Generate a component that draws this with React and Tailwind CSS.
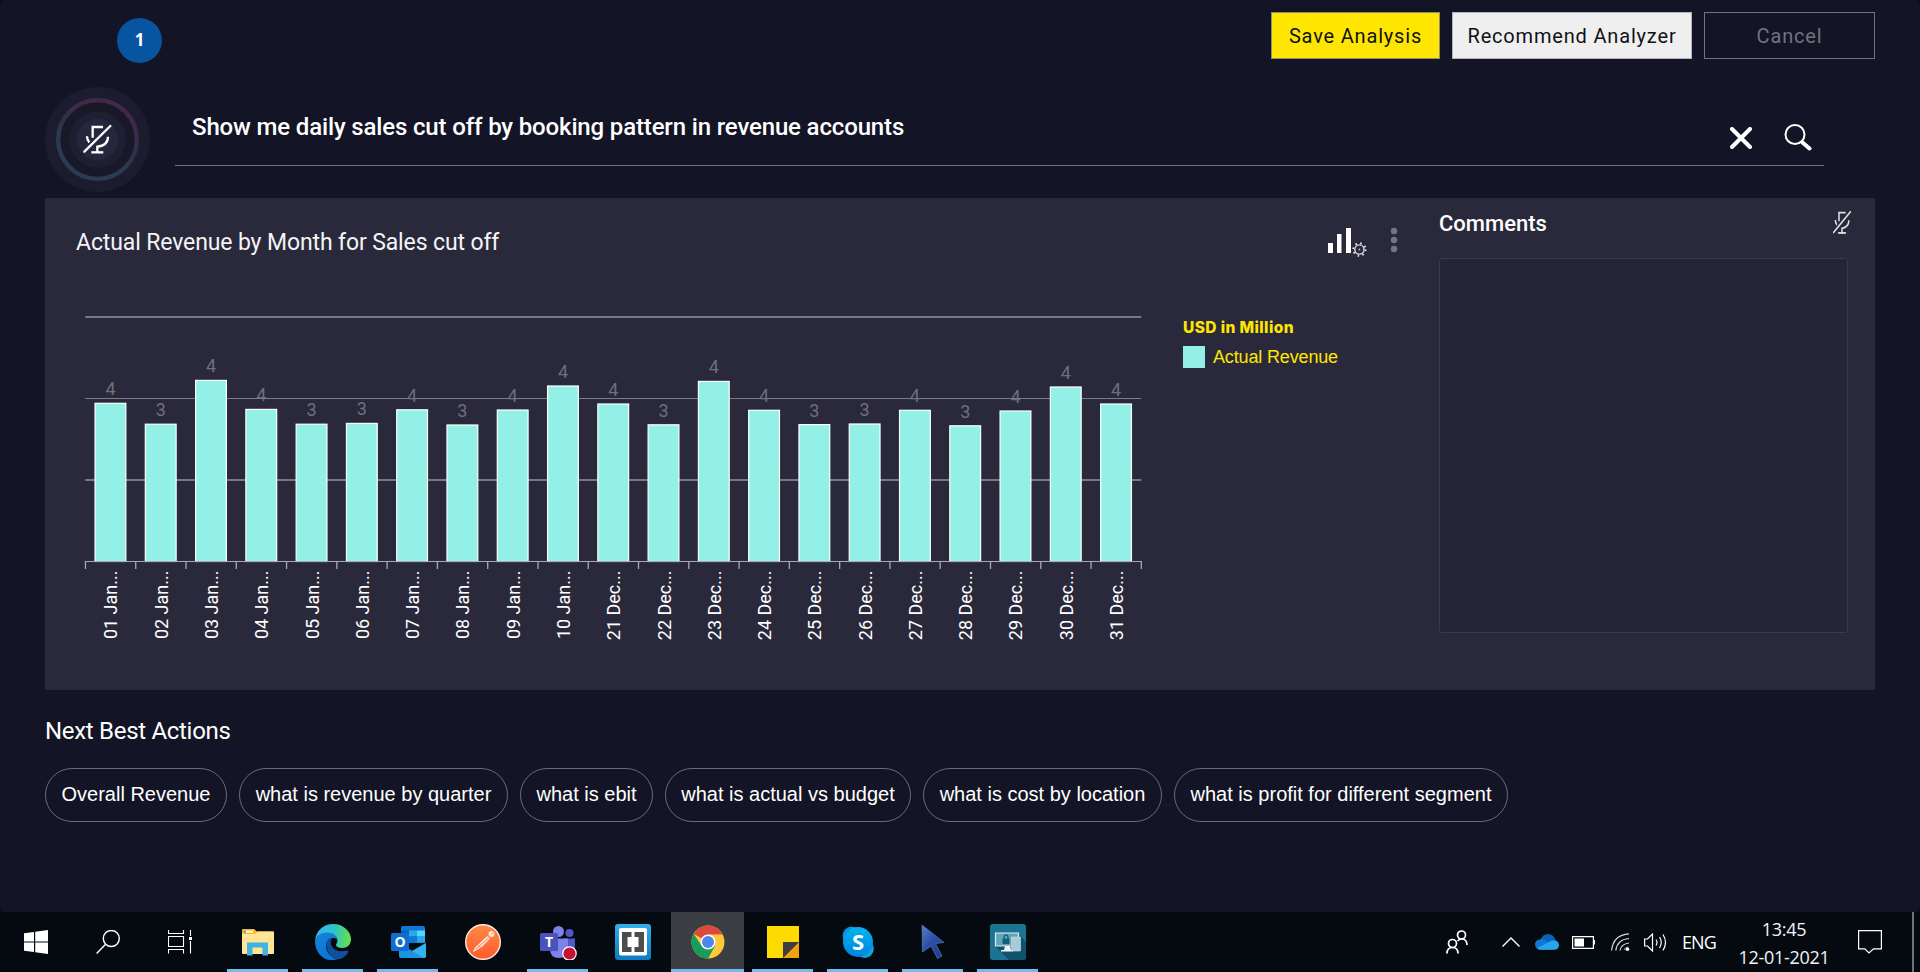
import React from "react";

const bars = [
  ["01 Jan...", 4, 403.3], ["02 Jan...", 3, 424.2], ["03 Jan...", 4, 380.4], ["04 Jan...", 4, 409.4],
  ["05 Jan...", 3, 424.2], ["06 Jan...", 3, 423.4], ["07 Jan...", 4, 409.8], ["08 Jan...", 3, 425],
  ["09 Jan...", 4, 410], ["10 Jan...", 4, 386], ["21 Dec...", 4, 404], ["22 Dec...", 3, 424.8],
  ["23 Dec...", 4, 381.4], ["24 Dec...", 4, 410.3], ["25 Dec...", 3, 424.6], ["26 Dec...", 3, 424],
  ["27 Dec...", 4, 410.3], ["28 Dec...", 3, 425.8], ["29 Dec...", 4, 411], ["30 Dec...", 4, 387], ["31 Dec...", 4, 404],
];

const STEP = 50.28;
const LEFT = 85.3;

function MicGlyph({ stroke = 7 }) {
  return (
    <g fill="none" stroke="#fff" strokeWidth={stroke} strokeLinecap="butt">
      <path d="M188 203V171H219" />
      <path d="M171 199Q171 210 178 217" />
      <path d="M234 200Q234 226 202 230V247" />
      <path d="M184 247H220" />
      <path d="M163 245L241 168" strokeLinecap="round" />
    </g>
  );
}

function MicButton() {
  return (
    <svg className="h-[105px] w-[105px] shrink-0" viewBox="45 51 315 315">
      <defs>
        <linearGradient id="ring" x1="0.75" y1="0" x2="0.25" y2="1">
          <stop offset="0" stopColor="#47264b" />
          <stop offset="0.5" stopColor="#312f48" />
          <stop offset="0.62" stopColor="#2a3b50" />
          <stop offset="1" stopColor="#293c52" />
        </linearGradient>
      </defs>
      <circle cx="202.5" cy="208.5" r="157.5" fill="#1b1d2f" />
      <circle cx="202.5" cy="208.5" r="118" fill="#181829" stroke="url(#ring)" strokeWidth="13" />
      <circle cx="202.5" cy="208.5" r="85" fill="#1f1f33" />
      <circle cx="202.5" cy="208.5" r="62" fill="#26263c" />
      <MicGlyph />
    </svg>
  );
}

function Chart() {
  return (
    <svg className="block h-[350px] w-[1080px]" viewBox="75 305 1080 350" fontFamily="Roboto, sans-serif">
      <rect x={LEFT} y="316" width="1056" height="2" fill="#777783" />
      <rect x={LEFT} y="398" width="1056" height="1" fill="#7c7c87" />
      <rect x={LEFT} y="479" width="1056" height="2" fill="#777783" />
      {bars.map(([label, value, y], i) => {
        const c = LEFT + STEP * (i + 0.5);
        return (
          <g key={label}>
            <rect x={c - 15.4} y={y} width="30.8" height={561.5 - y} fill="#93f0e6" stroke="#fff" strokeWidth="1.2" />
            <text x={c} y={y - 8} textAnchor="middle" fontSize="18" fill="#6f6f7f">{value}</text>
            <text transform={`translate(${c + 7} 570.5) rotate(-90)`} textAnchor="end" fontSize="18" letterSpacing="0" fill="#fff">{label}</text>
          </g>
        );
      })}
      <rect x={LEFT} y="561" width="1056" height="1" fill="#a7a8b2" />
      {Array.from({ length: 22 }, (_, i) => (
        <rect key={i} x={LEFT + STEP * i - 0.5} y="561" width="1.3" height="8" fill="#a7a8b2" />
      ))}
    </svg>
  );
}

function ChartSettingsIcon() {
  return (
    <svg className="h-[32px] w-[40px]" viewBox="1327 227 40 32">
      <path d="M1328 243h5v10h-5zM1337 234h4.5v19h-4.5zM1346 228h5v25h-5z" fill="#fff" />
      <g fill="none" stroke="#dddde2">
        <circle cx="1359.4" cy="249.5" r="4.6" strokeWidth="1.4" />
        <circle cx="1359.4" cy="249.5" r="6.2" strokeWidth="2" strokeDasharray="1.6 3.27" />
      </g>
      <circle cx="1359.4" cy="249.5" r="0.9" fill="#bbb" />
    </svg>
  );
}

const chips = [
  ["Overall Revenue", "w-[182px]"], ["what is revenue by quarter", "w-[269px]"], ["what is ebit", "w-[133px]"],
  ["what is actual vs budget", "w-[246px]"], ["what is cost by location", "w-[239px]"], ["what is profit for different segment", "w-[334px]"],
];

const WindowsIcon = () => (
  <svg className="h-6 w-6" viewBox="0 0 24 24" fill="#fff"><path d="M0 3.3L10 2V11.4H0zM11.2 1.8L24 0V11.4H11.2zM0 12.4H10V22L0 20.7zM11.2 12.4H24V24L11.2 22.2z" /></svg>
);
const TaskSearchIcon = () => (
  <svg className="h-6 w-6" viewBox="0 0 24 24" fill="none" stroke="#fff" strokeWidth="1.4"><circle cx="15.3" cy="8.5" r="8" /><path d="M9.6 14.3L.6 23.5" /></svg>
);
const TaskViewIcon = () => (
  <svg className="h-6 w-6" viewBox="0 0 24 24" fill="none" stroke="#fff" strokeWidth="1.1"><path d="M.5 0V3.5H15.5V0M.5 6.5H15.5V16.5H.5zM.5 23.5V19.5H15.5V23.5M22.5 0V6M22.5 11V23.5" /><path d="M21 7h3v3h-3z" fill="#fff" stroke="none" /></svg>
);
const ExplorerIcon = () => (
  <svg className="h-[36px] w-[36px]" viewBox="0 0 36 36">
    <path d="M2 6q0-1 1-1H14l3 2.4H32q2 0 2 2V14H2z" fill="#f9b932" /><path d="M4 6.7H13v2H4z" fill="#fff" /><path d="M4 6.7h2v2H4z" fill="#2aa8e0" />
    <path d="M2 10H15l3-2.5H34V29q0 1-1 1H3q-1 0-1-1z" fill="#ffe594" />
    <path d="M7 31.5V18.5H28V31.5H22.5V23.5H12.5V31.5z" fill="#3db3e6" />
  </svg>
);
const EdgeIcon = () => (
  <svg className="h-[36px] w-[36px]" viewBox="0 0 36 36">
    <defs>
      <linearGradient id="e1" x1="0" y1="0.4" x2="1" y2="0.5"><stop offset="0" stopColor="#35b5ee" /><stop offset="0.5" stopColor="#2bc3c8" /><stop offset="1" stopColor="#66e04a" /></linearGradient>
      <linearGradient id="e2" x1="0" y1="0" x2="0.6" y2="1"><stop offset="0" stopColor="#1785d8" /><stop offset="1" stopColor="#0a74d4" /></linearGradient>
    </defs>
    <path d="M0 17C1 6 9 0 18 0C29 0 36 8 36 15C36 21 32 24 27 24C23 24 21 22.500 21 21C21 19.500 22.500 19 22.500 16.500C22.500 12 17 9 12 9C6 9 1.500 12 0 17z" fill="url(#e1)" />
    <path d="M0 17C1.500 11 7 8.500 12 8.500C18 8.500 22.500 12 22.500 16C20 13 14 13.500 12 18C9 25 14 32 22 35.500C9 39 0 29 0 17z" fill="url(#e2)" />
    <path d="M11.500 19C12 15.500 14.500 14 17 14C13 21 19 30 32.500 26.500Q34 26.500 33 28.500C31 32.500 27 35 22 35.600C15 33 11 26 11.500 19z" fill="#114f9e" />
  </svg>
);
const OutlookIcon = () => (
  <svg className="h-[36px] w-[36px]" viewBox="0 0 36 36">
    <path d="M11 4q0-2 2-2H33q2 0 2 2V19H11z" fill="#0f78d4" /><path d="M11 6.500h8v9h-8z" fill="#0364b8" /><path d="M19 6.500h8v6h-8z" fill="#28a8ea" /><path d="M27 6.500h8v6h-8z" fill="#50d9ff" /><path d="M19 12.500h8v6h-8z" fill="#0f78d4" /><path d="M27 12.500h8v6h-8z" fill="#28a8ea" />
    <path d="M9 19L22.500 27L36 19V32q0 2-2 2H11q-2 0-2-2z" fill="#1b94e2" /><path d="M22 27L36 19V32q0 2-2 2z" fill="#35b1ee" />
    <rect x="1" y="9" width="18" height="18" rx="1.500" fill="#0f6fd0" />
    <text x="10" y="23" textAnchor="middle" fontSize="14" fontWeight="700" fontFamily="Open Sans, sans-serif" fill="#fff">O</text>
  </svg>
);
const PostmanIcon = () => (
  <svg className="h-[36px] w-[36px]" viewBox="0 0 36 36">
    <defs><linearGradient id="pm" x1="0" y1="0" x2="0" y2="1"><stop offset="0" stopColor="#ff8a48" /><stop offset="1" stopColor="#ff5a2c" /></linearGradient></defs>
    <circle cx="18" cy="18" r="17.300" fill="url(#pm)" stroke="#ffeadd" strokeWidth="1.400" />
    <path d="M8 27.500L10 23.500L19 15L22.500 12L25 14.500L17 23L12 26L8.500 28z" fill="#fbe3d6" />
    <path d="M10.500 25.500L23.500 14M13 21.500L16 24" stroke="#ff7b45" strokeWidth="0.900" />
    <circle cx="26.500" cy="10" r="3" fill="#fbe3d6" /><path d="M26.500 10l2-1.500" stroke="#ff7b45" />
  </svg>
);
const TeamsIcon = () => (
  <svg className="h-[36px] w-[38px]" viewBox="0 0 38 36">
    <circle cx="19.500" cy="7.500" r="5.500" fill="#7b83eb" /><circle cx="30.500" cy="9" r="4" fill="#5059c9" />
    <path d="M25 14.500H36V23q0 5-6 5h-5z" fill="#5059c9" /><path d="M11 14.500H29V25q0 9-9 9t-9-9z" fill="#7b83eb" />
    <rect x="1" y="9" width="18" height="18" rx="1.500" fill="#4a52bd" />
    <text x="10" y="23.200" textAnchor="middle" fontSize="14" fontWeight="700" fontFamily="Open Sans, sans-serif" fill="#fff">T</text>
    <circle cx="30.500" cy="29.500" r="6.700" fill="#c4122f" stroke="#fff" strokeWidth="1.200" />
  </svg>
);
const BracketsIcon = () => (
  <svg className="h-[36px] w-[36px]" viewBox="0 0 36 36">
    <defs><linearGradient id="br" x1="0" y1="0" x2="0" y2="1"><stop offset="0" stopColor="#2fb0ea" /><stop offset="1" stopColor="#0c7cc0" /></linearGradient></defs>
    <rect width="36" height="36" rx="3" fill="url(#br)" /><rect x="4" y="4" width="28" height="27.500" rx="2" fill="#fff" />
    <path d="M7 8H16.500V13H12.500V23H16.500V28H7zM19.500 8H29V28H19.500V23H23.500V13H19.500z" fill="#4d4d4d" />
  </svg>
);
const ChromeIcon = () => (
  <svg className="h-[34px] w-[34px]" viewBox="0 0 34 34">
    <circle cx="17" cy="17" r="16.500" fill="#fdc93a" />
    <path d="M17 17L2.700 8.750A16.500 16.500 0 0 1 31.300 8.750L32 9.500H17z" fill="#db4a3e" />
    <path d="M2.700 8.750A16.500 16.500 0 0 0 17 33.500L24 20.500L17 17L10 20z" fill="#179c5a" />
    <path d="M17 33.500L23.800 20.500L17 17z" fill="#179c5a" />
    <circle cx="17" cy="17" r="7.500" fill="#fff" /><circle cx="17" cy="17" r="6" fill="#4d86f0" />
  </svg>
);
const StickyIcon = () => (
  <svg className="h-8 w-8" viewBox="0 0 32 32"><path d="M0 0H32V16L16 32H0z" fill="#fedb00" /><path d="M32 16V32H16z" fill="#f0a30a" /><path d="M16 16H32L16 32z" fill="#3f3f41" /></svg>
);
const SkypeIcon = () => (
  <svg className="h-8 w-8" viewBox="0 0 32 32">
    <defs><linearGradient id="sk" x1="0" y1="0" x2="0" y2="1"><stop offset="0" stopColor="#00b4f0" /><stop offset="1" stopColor="#0083de" /></linearGradient></defs>
    <circle cx="9.500" cy="9.500" r="9" fill="#0a8fd4" /><circle cx="22.800" cy="23" r="9" fill="#15a0e0" /><circle cx="16" cy="16" r="15" fill="url(#sk)" />
    <text x="16" y="23.500" textAnchor="middle" fontSize="22" fontWeight="700" fontFamily="Open Sans, sans-serif" fill="#fff">S</text>
  </svg>
);
const CursorIcon = () => (
  <svg className="h-9 w-6" viewBox="0 0 24 36">
    <defs><linearGradient id="cu" x1="0" y1="0" x2="0.800" y2="1"><stop offset="0" stopColor="#5d7fc4" /><stop offset="0.500" stopColor="#2b4fa8" /><stop offset="1" stopColor="#1d3a8c" /></linearGradient></defs>
    <path d="M1 1L23 18.500L14.500 19.500L21 32L16.500 34.500L10 22L1.500 28z" fill="url(#cu)" stroke="#5a78b8" strokeWidth="0.700" />
  </svg>
);
const RemoteIcon = () => (
  <svg className="h-[36px] w-[36px]" viewBox="0 0 36 36">
    <rect width="36" height="36" rx="3" fill="#1b7492" /><path d="M5 22L19 36H33q3 0 3-3V18L29 10z" fill="#10536c" />
    <path d="M5.500 9H28.500V22H5.500z" fill="#64a6b8" stroke="#dcecf0" strokeWidth="1.200" /><path d="M15 22h5l1 4h2v1.500H11V26h3z" fill="#eef5f7" />
    <path d="M12.500 14.500h7v5.500h-7z" fill="#14617c" /><path d="M14 15v-2q0-2 2-2t2 2v2" fill="none" stroke="#14617c" strokeWidth="1.300" />
    <path d="M21.500 13H30.500V27H21.500z" fill="#a9cbd8" stroke="#c9e0e8" strokeWidth="0.600" />
  </svg>
);

const apps = [
  [ExplorerIcon, true, false], [EdgeIcon, true, false], [OutlookIcon, true, false], [PostmanIcon, false, false], [TeamsIcon, true, false],
  [BracketsIcon, false, false], [ChromeIcon, true, true], [StickyIcon, true, false], [SkypeIcon, true, false], [CursorIcon, true, false], [RemoteIcon, true, false],
];

function Taskbar() {
  return (
    <footer className="flex h-[60px] shrink-0 bg-[#050a11]">
      {[WindowsIcon, TaskSearchIcon, TaskViewIcon].map((Icon, i) => (
        <div key={i} className="flex w-[72px] items-center justify-center"><Icon /></div>
      ))}
      <div className="ml-[4px] flex">
        {apps.map(([Icon, open, active], i) => (
          <div key={i} className="flex w-[75px] justify-center">
            <div className={active ? "flex w-[73px] flex-col bg-[#3b3e43]" : "flex w-[61px] flex-col"}>
              <div className="flex h-[57px] items-center justify-center pt-[3px]"><Icon /></div>
              {open && <div className="h-[3px] bg-[#76b9ed]" />}
            </div>
          </div>
        ))}
      </div>
      <div className="ml-auto flex items-center">
        <svg className="mr-[34px] h-[24px] w-[22px]" viewBox="0 0 22 24" fill="none" stroke="#fff" strokeWidth="1.700"><circle cx="15.500" cy="5" r="4" /><circle cx="6.500" cy="13.500" r="4" /><path d="M1 23.500q0-6 5.500-6t5.500 6M11.500 11q2-2 4-2q5.500 0 5.500 6" /></svg>
        <svg className="mr-[15px] h-[10px] w-[18px]" viewBox="0 0 18 10" fill="none" stroke="#fff" strokeWidth="1.400"><path d="M.5 9.500L9 1L17.500 9.500" /></svg>
        <svg className="mr-[13px] h-[16px] w-[24px]" viewBox="0 0 24 16"><path d="M5 6Q8 0 13 0Q19 0 20.500 6.500L13 10z" fill="#0b62b8" /><path d="M4.500 15.500Q0 14.500 0 10.500Q0 6 5 5.500Q9 4.500 13 8L17 15.500z" fill="#0f78d6" /><path d="M2 14L13 8.500Q17 5.500 20.500 6.500Q24 7.500 24 11.500Q23.500 15.500 20 15.700H5Q3 15.500 2 14z" fill="#28a5ea" /></svg>
        <svg className="mr-[16px] h-[13px] w-[23px]" viewBox="0 0 23 13"><path d="M.6.6H21.400V12.400H.6z" fill="none" stroke="#fff" strokeWidth="1.200" /><path d="M2.500 2.500H12V10.500H2.500zM22 4h1v4.500h-1z" fill="#fff" /></svg>
        <svg className="mr-[14px] h-[18px] w-[19px]" viewBox="0 0 19 18" fill="none" stroke="#d8d8da" strokeWidth="1.200"><path d="M.6 17.500Q2 2 18 .8M4.800 17.500Q6 6.500 18 5.500M9 17.500Q10 11 18 10" /><path d="M13 17Q14 14.500 17.500 13.800" opacity=".6" /><circle cx="16.500" cy="16.200" r="1.800" fill="#fff" stroke="none" /></svg>
        <svg className="mr-[15px] h-[19px] w-[23px]" viewBox="0 0 23 19" fill="none" stroke="#fff" strokeWidth="1.200"><path d="M.6 6H3.500L8.500 1V18L3.500 13H.6z" /><path d="M12 6.500Q14 9.500 12 12.500M15.500 4Q19 9.500 15.500 15M19 1.500Q24 9.500 19 17.500" /></svg>
        <span className="w-[54px] font-['Open_Sans',sans-serif] text-[18px] tracking-[-0.9px] text-white">ENG</span>
        <div className="w-[96px] pt-px text-center font-['Open_Sans',sans-serif] text-[18px] leading-[28px] tracking-[-0.300px] text-[#f3f3f4]"><div>13:45</div><div>12-01-2021</div></div>
        <svg className="ml-[26px] h-[24px] w-[24px]" viewBox="0 0 24 24" fill="none" stroke="#fff" strokeWidth="1.200"><path d="M.6.6H23.400V18.800H15.500L11 23L6.800 18.800H.6z" /></svg>
        <div className="mr-[6px] ml-[30px] h-[60px] w-[2px] bg-[#6f7176]" />
      </div>
    </footer>
  );
}

export default function App() {
  return (
    <div className="flex h-[972px] w-[1920px] flex-col overflow-hidden bg-[#050a11] font-[Roboto,sans-serif] text-white">
      <main className="flex h-[912px] flex-col rounded-[4px] bg-[#131425] px-[45px]">
        <header className="flex h-[87px] items-start justify-between pt-[12px]">
          <div className="mt-[6px] ml-[72px] flex h-[45px] w-[45px] items-center justify-center rounded-full bg-[#0754a0] pb-[2px] font-['Noto_Sans',sans-serif] text-[17px] font-bold">1</div>
          <div className="flex gap-[12px] text-[20px] tracking-[0.820px]">
            <button className="h-[47px] w-[169px] border border-[#8f8f73] bg-[#ffe600] text-[#111118]">Save Analysis</button>
            <button className="h-[47px] w-[240px] border border-[#b5b5bd] bg-[#efefef] text-[#111118]">Recommend Analyzer</button>
            <button className="h-[47px] w-[171px] border border-[#73737f] text-[#73737f]">Cancel</button>
          </div>
        </header>

        <section className="flex h-[111px]">
          <MicButton />
          <div className="ml-[25px] flex h-[79px] w-[1649px] items-center border-b border-[#6f6f7f] pt-[1px] pr-[12px] pl-[17px]">
            <span className="grow pb-[28px] text-[24px] leading-none font-medium tracking-[-0.150px] translate-y-[14px]">Show me daily sales cut off by booking pattern in revenue accounts</span>
            <svg className="mt-[22px] mr-[32px] h-[22px] w-[22px]" viewBox="0 0 22 22" stroke="#fff" strokeWidth="4" strokeLinecap="round"><path d="M2 2L20 20M20 2L2 20" /></svg>
            <svg className="mt-[22px] h-[27px] w-[28px]" viewBox="0 0 28 27" fill="none" stroke="#fff"><circle cx="11" cy="10.500" r="9.500" strokeWidth="2" /><path d="M18.500 18.500L25.500 24.500" strokeWidth="4" strokeLinecap="round" /></svg>
          </div>
        </section>

        <section className="flex h-[492px] bg-[#29293b]">
          <div className="w-[1394px]">
            <div className="flex h-[107px] items-start pl-[31px]">
              <h2 className="w-[1251px] pt-[31px] text-[23px] leading-[27px] font-normal tracking-[-0.120px] text-[#f4f4f6]">Actual Revenue by Month for Sales cut off</h2>
              <div className="flex pt-[29px]">
                <ChartSettingsIcon />
                <svg className="ml-[23px] h-[26px] w-[8px]" viewBox="0 0 8 26" fill="#747480"><circle cx="4" cy="4" r="3.200" /><circle cx="4" cy="13" r="3.200" /><circle cx="4" cy="22" r="3.200" /></svg>
              </div>
            </div>
            <div className="flex pl-[30px]">
              <Chart />
              <div className="ml-[28px] pt-[13px] text-[#ffe600]">
                <div className="font-[Inter,sans-serif] text-[15.500px] leading-[20px] font-extrabold tracking-[0.400px]">USD in Million</div>
                <div className="mt-[8px] flex items-center font-['Liberation_Sans',sans-serif] text-[18px] leading-[22px] tracking-[-0.150px]">
                  <span className="mr-[8px] h-[22px] w-[22px] bg-[#93f0e6]" />Actual Revenue
                </div>
              </div>
            </div>
          </div>
          <div className="w-[409px]">
            <div className="flex h-[60px] justify-between">
              <h2 className="pt-[13px] text-[22px] leading-[26px] font-medium">Comments</h2>
              <svg className="mt-[13px] -mr-[3px] h-[23px] w-[18px]" viewBox="160 165 84 86" preserveAspectRatio="none" opacity="0.850"><MicGlyph /></svg>
            </div>
            <div className="h-[375px] rounded-[3px] border border-[#3a3a49] bg-[#252537]" />
          </div>
        </section>

        <section className="pt-[26px]">
          <h2 className="text-[24px] leading-[30px] font-normal tracking-[-0.300px]">Next Best Actions</h2>
          <div className="mt-[22px] flex gap-[12px] font-['Liberation_Sans',sans-serif] text-[20px]">
            {chips.map(([t, w]) => (
              <button key={t} className={`${w} h-[54px] rounded-full border border-[#6b6b79] pb-[3px] whitespace-nowrap`}>{t}</button>
            ))}
          </div>
        </section>
      </main>
      <Taskbar />
    </div>
  );
}
